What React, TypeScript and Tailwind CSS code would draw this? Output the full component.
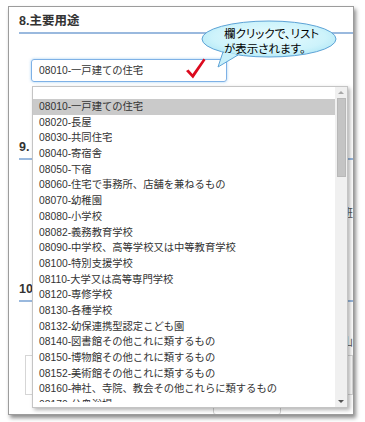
const options = [
  "08010-一戸建ての住宅",
  "08020-長屋",
  "08030-共同住宅",
  "08040-寄宿舎",
  "08050-下宿",
  "08060-住宅で事務所、店舗を兼ねるもの",
  "08070-幼稚園",
  "08080-小学校",
  "08082-義務教育学校",
  "08090-中学校、高等学校又は中等教育学校",
  "08100-特別支援学校",
  "08110-大学又は高等専門学校",
  "08120-専修学校",
  "08130-各種学校",
  "08132-幼保連携型認定こども園",
  "08140-図書館その他これに類するもの",
  "08150-博物館その他これに類するもの",
  "08152-美術館その他これに類するもの",
  "08160-神社、寺院、教会その他これらに類するもの",
  "08170-公衆浴場",
];

const font = "font-['Liberation_Sans','Noto_Sans_CJK_JP',sans-serif]";

function Heading({ label }: { label: string }) {
  return (
    <div className="ml-[10px] border-b-2 border-[#9ab9de] pb-[3px]">
      <h2 className="text-[12.5px] leading-[16px] font-bold text-[#333]">{label}</h2>
    </div>
  );
}

function Callout() {
  return (
    <div className="absolute left-[195px] top-[14px] w-[150px] h-[58px]">
      <svg width="150" height="58" viewBox="0 0 150 58" className="absolute inset-0">
        <defs>
          <radialGradient id="bub" cx="50%" cy="45%" r="60%">
            <stop offset="0%" stopColor="#e9fbfe" />
            <stop offset="70%" stopColor="#cdf3fb" />
            <stop offset="100%" stopColor="#aee6f5" />
          </radialGradient>
        </defs>
        <path d="M28 38 L23 53 L43 41 Z" fill="#c8f0fa" stroke="#5ea3d6" strokeWidth="1" />
        <ellipse cx="74" cy="25" rx="67" ry="18" fill="url(#bub)" stroke="#5ea3d6" strokeWidth="1" />
        <path d="M29.5 37.5 L25 50 L41.5 40.5 Z" fill="#c8f0fa" />
      </svg>
      <div
        className={`absolute left-[29px] top-[13px] text-[11.5px] leading-[14.5px] text-black [font-feature-settings:'palt'] ${font}`}
      >
        <div>欄クリックで、リスト</div>
        <div>が表示されます。</div>
      </div>
    </div>
  );
}

function Check() {
  return (
    <svg width="24" height="24" viewBox="0 0 24 24" className="absolute left-[184px] top-[57px]">
      <polygon points="2,14 4.5,12.5 8.5,17 19.5,1.5 21.5,3 9,21.5" fill="#dc0a1e" />
    </svg>
  );
}

function Dropdown() {
  return (
    <div className="absolute left-[32px] top-[86px] w-[316px] h-[322px] flex items-start border border-[#c4c4c4] bg-white shadow-[2px_2px_4px_rgba(0,0,0,0.3)] overflow-hidden">
      <div className="flex-1 h-[315px] pt-[12px] overflow-hidden">
        {options.map((o, i) => (
          <div
            key={o}
            className={`h-[15.7px] leading-[15.7px] pl-[6px] text-[10.3px] whitespace-nowrap text-[#333] ${
              i === 0 ? "bg-[#cacaca]" : ""
            }`}
          >
            {o}
          </div>
        ))}
      </div>
      <div className="w-[12px] self-stretch bg-[#f0f0f0] flex flex-col items-center">
        <div className="h-[11px] flex items-center justify-center">
          <div className="w-0 h-0 border-l-[3px] border-r-[3px] border-b-[3px] border-l-transparent border-r-transparent border-b-[#a8a8a8]" />
        </div>
        <div className="w-[9px] h-[79px] bg-[#c4c4c4] border border-[#b8b8b8]" />
        <div className="flex-1" />
        <div className="h-[12px] flex items-center justify-center">
          <div className="w-0 h-0 border-l-[3px] border-r-[3px] border-t-[3px] border-l-transparent border-r-transparent border-t-[#555]" />
        </div>
      </div>
    </div>
  );
}

export default function App() {
  return (
    <div className={`relative w-[365px] h-[422px] bg-white overflow-hidden pt-[6px] pl-[8px] ${font}`}>
      <div className="w-[346px] h-[409px] border border-[#9c9c9c] bg-white shadow-[2px_3px_4px_rgba(0,0,0,0.45)] overflow-hidden pt-[6px]">
        <Heading label="8.主要用途" />
        <div className="ml-[22px] mt-[25px] w-[196px] h-[23px] border border-[#7eb1e6] rounded-[3px] shadow-[0_0_3px_rgba(102,175,233,0.6)] flex items-center pl-[7px] text-[10.3px] text-[#333]">
          08010-一戸建ての住宅
        </div>

        <div className="mt-[57px]">
          <Heading label="9." />
        </div>
        <div className="mt-[46px] pl-[333px] text-[11px] leading-[14px] text-[#555] whitespace-nowrap">
          班
        </div>

        <div className="mt-[61px]">
          <Heading label="10" />
        </div>
        <div className="mt-[33px] pl-[333px] text-[11px] leading-[14px] text-[#555] whitespace-nowrap">
          山
        </div>
        <div className="ml-[16px] mt-[6px] h-[40px] border border-[#d6d6d6]" />
        <div className="ml-[204px] mt-[8px] w-[68px] h-[12px] border border-[#d0d0d0] rounded-[3px]" />
      </div>

      <Check />
      <Callout />
      <Dropdown />
    </div>
  );
}
